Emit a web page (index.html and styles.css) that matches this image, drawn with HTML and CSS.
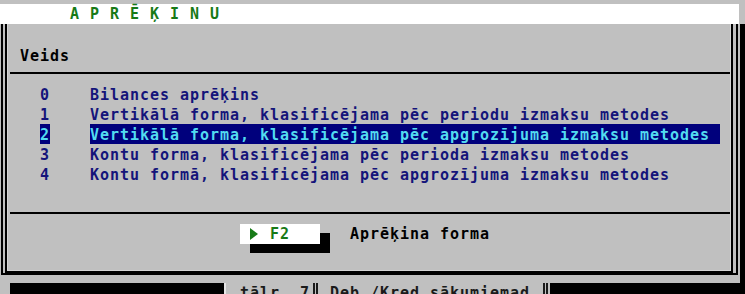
FILE: index.html
```html
<!DOCTYPE html>
<html lang="lv">
<head>
  <meta charset="UTF-8">
  <meta name="viewport" content="width=device-width, initial-scale=1.0">
  <title>Aprēķinu forma</title>
  <link rel="stylesheet" href="styles.css">
</head>
<body>
  <div class="title-bar"><span class="title">A P R Ē Ķ I N U</span></div>
  <div class="window-row">
    <div class="frame-outer">
      <div class="frame-inner">
        <div class="pane">
          <div class="heading">Veids</div>
          <hr class="rule">
          <ul class="options">
            <li><span class="num">0</span><span class="label">Bilances aprēķins</span></li>
            <li><span class="num">1</span><span class="label">Vertikālā forma, klasificējama pēc periodu izmaksu metodes</span></li>
            <li class="selected"><span class="num">2</span><span class="label">Vertikālā forma, klasificējama pēc apgrozījuma izmaksu metodes</span></li>
            <li><span class="num">3</span><span class="label">Kontu forma, klasificējama pēc perioda izmaksu metodes</span></li>
            <li><span class="num">4</span><span class="label">Kontu formā, klasificējama pēc apgrozījuma izmaksu metodes</span></li>
          </ul>
          <hr class="rule rule-low">
          <div class="actions">
            <span class="key"><span class="arrow"></span>F2</span>
            <span class="action-label">Aprēķina forma</span>
          </div>
        </div>
      </div>
    </div>
    <div class="shadow-right"></div>
  </div>
  <div class="status">
    <div class="status-dark status-left"></div>
    <div class="status-cell">
      <span class="status-text">tālr. 7</span><span class="dbl"></span><span class="status-text deb">Deb./Kred.sākumiemad</span><span class="dbl dbl-end"></span>
    </div>
    <div class="status-dark status-fill"></div>
  </div>
</body>
</html>
```

FILE: styles.css
```css
body {
  margin: 0;
  width: 745px;
  height: 294px;
  overflow: hidden;
  background: #c0c0c0;
  font-family: "DejaVu Sans Mono", monospace;
  font-size: 15px;
  letter-spacing: 0.97px;
  font-weight: bold;
  line-height: 20px;
}
.title-bar {
  margin-top: 4px;
  width: 739px;
  height: 20px;
  background: #fff;
  padding-left: 70px;
  box-sizing: border-box;
  color: #177a17;
}
.window-row {
  display: flex;
  align-items: flex-start;
}
.frame-outer {
  margin-left: 1px;
  width: 737px;
  height: 251px;
  border: 2px solid #000;
  border-top: 0;
  padding: 0 3px 2px 2px;
  box-sizing: border-box;
}
.frame-inner {
  height: 249px;
  border: 2px solid #000;
  border-top: 0;
  box-sizing: border-box;
}
.pane {
  height: 247px;
  border: 1px solid #d4d4d4;
  border-top: 0;
  padding-left: 12px;
  box-sizing: border-box;
  overflow: hidden;
}
.shadow-right {
  margin-left: 2px;
  width: 5px;
  height: 259px;
  background: #000;
}
.heading {
  margin-top: 22px;
  height: 20px;
  color: #000;
}
.rule {
  height: 2px;
  margin: 6px 0 0 -10px;
  border: 0;
  background: #000;
}
.rule-low {
  margin-top: 28px;
}
.options {
  list-style: none;
  margin: 10px 0 0;
  padding: 0;
  color: #14147a;
}
.options li {
  display: flex;
  height: 20px;
}
.num,
.label {
  padding-top: 1px;
  height: 19px;
  line-height: 20px;
}
.num {
  width: 10px;
  margin-left: 20px;
  margin-right: 40px;
}
.label {
  width: 630px;
  white-space: nowrap;
}
.selected .num,
.selected .label {
  background: #00007c;
  color: #52dcf0;
}
.actions {
  margin-top: 10px;
  display: flex;
  height: 20px;
}
.key {
  display: flex;
  align-items: center;
  width: 80px;
  margin-left: 220px;
  padding-left: 10px;
  box-sizing: border-box;
  background: #fff;
  color: #177a17;
  box-shadow: 10px 9px 0 #000;
}
.arrow {
  width: 0;
  height: 0;
  margin-right: 12px;
  border-left: 8px solid #177a17;
  border-top: 6.5px solid transparent;
  border-bottom: 6.5px solid transparent;
}
.action-label {
  margin-left: 30px;
  color: #000;
}
.status {
  display: flex;
  height: 20px;
}
.status-dark {
  background: #000;
}
.status-left {
  margin-left: 10px;
  width: 214px;
}
.status-cell {
  display: flex;
  width: 326px;
  border-left: 2px solid #e6e6e6;
  padding-left: 14px;
  box-sizing: border-box;
  color: #1a1a1a;
  white-space: nowrap;
}
.dbl {
  width: 1px;
  height: 20px;
  margin-left: 3px;
  border-left: 2px solid #1a1a1a;
  border-right: 2px solid #1a1a1a;
}
.deb {
  margin-left: 12px;
}
.dbl-end {
  margin-left: 13px;
}
.status-fill {
  flex: 1;
}
```
